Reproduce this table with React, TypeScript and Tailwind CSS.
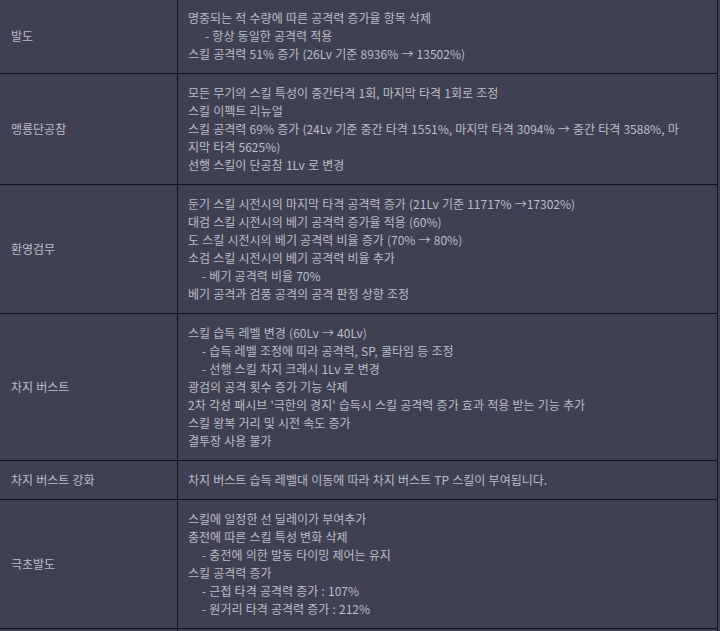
import React from 'react'

type Line = string | { text: string; indent: 'sm' | 'lg' }

interface Row {
  name: string
  lines: Line[]
}

const rows: Row[] = [
  {
    name: '발도',
    lines: [
      '명중되는 적 수량에 따른 공격력 증가율 항목 삭제',
      { text: '- 항상 동일한 공격력 적용', indent: 'lg' },
      '스킬 공격력 51% 증가 (26Lv 기준 8936% → 13502%)',
    ],
  },
  {
    name: '맹룡단공참',
    lines: [
      '모든 무기의 스킬 특성이 중간타격 1회, 마지막 타격 1회로 조정',
      '스킬 이펙트 리뉴얼',
      '스킬 공격력 69% 증가 (24Lv 기준 중간 타격 1551%, 마지막 타격 3094% → 중간 타격 3588%, 마',
      '지막 타격 5625%)',
      '선행 스킬이 단공참 1Lv 로 변경',
    ],
  },
  {
    name: '환영검무',
    lines: [
      '둔기 스킬 시전시의 마지막 타격 공격력 증가 (21Lv 기준 11717% →17302%)',
      '대검 스킬 시전시의 베기 공격력 증가율 적용 (60%)',
      '도 스킬 시전시의 베기 공격력 비율 증가 (70% → 80%)',
      '소검 스킬 시전시의 베기 공격력 비율 추가',
      { text: '- 베기 공격력 비율 70%', indent: 'sm' },
      '베기 공격과 검풍 공격의 공격 판정 상향 조정',
    ],
  },
  {
    name: '차지 버스트',
    lines: [
      '스킬 습득 레벨 변경 (60Lv → 40Lv)',
      { text: '- 습득 레벨 조정에 따라 공격력, SP, 쿨타임 등 조정', indent: 'sm' },
      { text: '- 선행 스킬 차지 크래시 1Lv 로 변경', indent: 'sm' },
      '광검의 공격 횟수 증가 기능 삭제',
      "2차 각성 패시브 '극한의 경지' 습득시 스킬 공격력 증가 효과 적용 받는 기능 추가",
      '스킬 왕복 거리 및 시전 속도 증가',
      '결투장 사용 불가',
    ],
  },
  {
    name: '차지 버스트 강화',
    lines: ['차지 버스트 습득 레벨대 이동에 따라 차지 버스트 TP 스킬이 부여됩니다.'],
  },
  {
    name: '극초발도',
    lines: [
      '스킬에 일정한 선 딜레이가 부여추가',
      '충전에 따른 스킬 특성 변화 삭제',
      { text: '- 충전에 의한 발동 타이밍 제어는 유지', indent: 'sm' },
      '스킬 공격력 증가',
      { text: '- 근접 타격 공격력 증가 : 107%', indent: 'sm' },
      { text: '- 원거리 타격 공격력 증가 : 212%', indent: 'sm' },
    ],
  },
]

function ChangeRow({ row }: { row: Row }) {
  return (
    <div className="flex border-b border-[#121318]">
      <div className="w-[178px] shrink-0 flex items-center px-[11px] border-r border-[#121318]">
        {row.name}
      </div>
      <div className="flex-1 py-[10px] pl-[10px] pr-[8px]">
        {row.lines.map((line, i) =>
          typeof line === 'string' ? (
            <p key={i} className="whitespace-nowrap">{line}</p>
          ) : (
            <p
              key={i}
              className={`whitespace-nowrap ${line.indent === 'lg' ? 'pl-[17px]' : 'pl-[14px]'}`}
            >
              {line.text}
            </p>
          )
        )}
      </div>
    </div>
  )
}

export default function App() {
  return (
    <div
      className="min-h-screen bg-[#3f4152] text-[#bcbdc5] text-[12px] leading-[18px] [word-spacing:0.5px] overflow-hidden"
      style={{ fontFamily: '"Noto Sans CJK KR", "Noto Sans", sans-serif' }}
    >
      <div className="w-[719px] -ml-px -mt-[2px] border border-b-0 border-[#121318]">
        {rows.map((row, i) => (
          <ChangeRow key={i} row={row} />
        ))}
        <div className="flex h-[20px]">
          <div className="w-[178px] shrink-0 border-r border-[#121318]" />
          <div className="flex-1" />
        </div>
      </div>
    </div>
  )
}
